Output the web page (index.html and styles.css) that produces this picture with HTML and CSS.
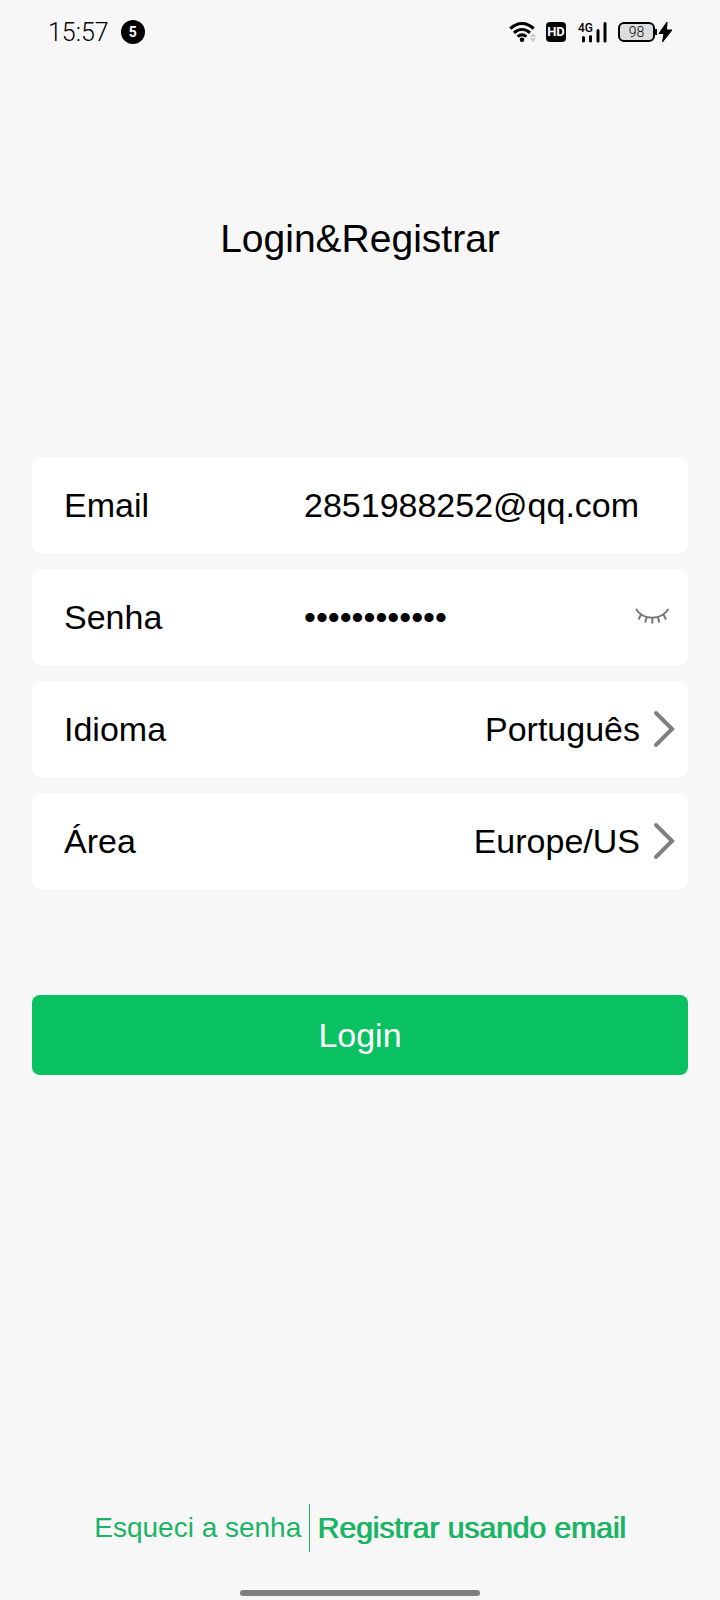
FILE: index.html
```html
<!DOCTYPE html>
<html lang="pt">
<head>
    <meta charset="UTF-8">
    <meta name="viewport" content="width=device-width, initial-scale=1.0">
    <title>Login&amp;Registrar</title>
    <link rel="stylesheet" href="styles.css">
</head>
<body>
    <header class="status-bar">
        <span class="time">15:57</span>
        <span class="badge">5</span>
        <div class="status-icons">
            <svg class="wifi" width="28" height="22" viewBox="0 0 28 22">
                <g fill="none" stroke="#000" stroke-width="3">
                    <path d="M1.3 7.6C8.5 0.8 17.5 0.8 24.7 7.6"/>
                    <path d="M5 11.8C10 7.3 16 7.3 21 11.8"/>
                    <path d="M8.6 15.7C11.5 13.3 14.5 13.3 17.4 15.7"/>
                </g>
                <circle cx="13" cy="18.8" r="2.3"/>
                <path d="M21.5 15.5L24 12.5L26.5 15.5ZM21.5 17.5L24 20.5L26.5 17.5Z" fill="#ccc" stroke="#ccc"/>
            </svg>
            <span class="hd">HD</span>
            <svg class="signal" width="30" height="22" viewBox="0 0 30 22">
                <text class="signal-text" x="0" y="11">4G</text>
                <path d="M5.5 16.5V20M12.5 15.5V20M20 9.5V20M27 2.5V20" stroke="#000" stroke-width="3" stroke-linecap="round"/>
            </svg>
            <span class="battery">98</span>
            <svg class="bolt" width="18" height="22" viewBox="0 0 18 22">
                <path d="M0 8V14" stroke="#000" stroke-width="4"/>
                <path d="M12 1L4 12.5H9L7.5 21L17 9H11.5Z" stroke="#000"/>
            </svg>
        </div>
    </header>

    <main>
        <h1>Login&amp;Registrar</h1>

        <form>
            <div class="row">
                <label for="email">Email</label>
                <input type="email" id="email" value="2851988252@qq.com">
            </div>
            <div class="row">
                <label for="senha">Senha</label>
                <input type="password" id="senha" value="abcdef123456">
                <button type="button" class="eye" aria-label="Mostrar senha">
                    <svg width="36" height="20" viewBox="0 0 36 20" fill="none" stroke="#777" stroke-width="2">
                        <path d="M2 2C9 13.5 27 13.5 34.5 2M7 7.5L4.5 12.5M12.5 10.5L11.3 15.5M18.3 10.8V16.5M24 10.5L25.3 15.5M29.5 7.5L32 12.5"/>
                    </svg>
                </button>
            </div>
            <div class="row">
                <label for="idioma">Idioma</label>
                <select id="idioma">
                    <option>Português</option>
                </select>
                <svg class="arrow" width="24" height="40" viewBox="0 0 24 40">
                    <path d="M4 4L20 20L4 36"/>
                </svg>
            </div>
            <div class="row">
                <label for="area">Área</label>
                <select id="area">
                    <option>Europe/US</option>
                </select>
                <svg class="arrow" width="24" height="40" viewBox="0 0 24 40">
                    <path d="M4 4L20 20L4 36"/>
                </svg>
            </div>

            <button type="submit" class="login">Login</button>
        </form>
    </main>

    <footer>
        <nav class="links">
            <a href="#" class="forgot">Esqueci a senha</a>
            <a href="#" class="register">Registrar usando email</a>
        </nav>
        <div class="home-bar"></div>
    </footer>
</body>
</html>
```
FILE: styles.css
```css
* {
    margin: 0;
    padding: 0;
    box-sizing: border-box;
}

body {
    font-family: "Liberation Sans", Arial, sans-serif;
    font-size: 34px;
    background: #f7f7f7;
    color: #000;
    display: flex;
    flex-direction: column;
    min-height: 100vh;
}

.status-bar {
    display: flex;
    align-items: center;
    height: 64px;
    padding: 0 47px 0 48px;
    font-family: Roboto, sans-serif;
}

.time {
    font-size: 25px;
    font-weight: 300;
}

.badge {
    width: 24px;
    height: 24px;
    margin-left: 12px;
    border-radius: 50%;
    background: #000;
    color: #fff;
    font-size: 14px;
    font-weight: bold;
    line-height: 25px;
    text-align: center;
}

.status-icons {
    display: flex;
    align-items: center;
    margin-left: auto;
}

.hd {
    width: 20px;
    height: 20px;
    margin: 0 12px 0 9px;
    border-radius: 4px;
    background: #000;
    color: #fff;
    font-size: 13px;
    font-weight: bold;
    line-height: 20px;
    text-align: center;
}

.signal-text {
    font-size: 12px;
    font-weight: 500;
}

.battery {
    width: 37px;
    height: 20px;
    margin-left: 10px;
    border: 2px solid #000;
    border-radius: 6px;
    background: #ddd;
    font-size: 14px;
    font-weight: 300;
    line-height: 17px;
    text-align: center;
}

h1 {
    margin-top: 151px;
    font-size: 39px;
    font-weight: normal;
    line-height: 48px;
    text-align: center;
}

form {
    display: flex;
    flex-direction: column;
    gap: 16px;
    margin-top: 194px;
    padding: 0 32px;
}

.row {
    display: flex;
    align-items: center;
    height: 96px;
    padding: 0 12px 0 32px;
    border-radius: 8px;
    background: #fff;
}

.row label {
    width: 240px;
    flex-shrink: 0;
}

.row input,
.row select {
    flex: 1;
    min-width: 0;
    height: 48px;
    border: none;
    outline: none;
    background: none;
    color: #000;
    font: inherit;
}

.row select {
    appearance: none;
    text-align: right;
    text-align-last: right;
}

.eye {
    display: flex;
    margin-right: 6px;
    border: none;
    background: none;
}

.arrow {
    margin-left: 12px;
    fill: none;
    stroke: #808080;
    stroke-width: 4;
    stroke-linecap: round;
}

.login {
    height: 80px;
    margin-top: 90px;
    border: none;
    border-radius: 8px;
    background: #09c160;
    color: #fff;
    font: inherit;
}

footer {
    margin-top: auto;
    padding: 40px 0 4px;
}

.links {
    display: flex;
    justify-content: center;
    line-height: 48px;
}

.links a {
    color: #1bb464;
    text-decoration: none;
}

.forgot {
    padding-right: 8px;
    border-right: 1px solid #1bb464;
    font-size: 28px;
}

.register {
    padding-left: 7px;
    font-size: 30px;
    text-shadow: 1px 0 #1bb464;
}

.home-bar {
    width: 240px;
    height: 6px;
    margin: 38px auto 0;
    border-radius: 3px;
    background: #7f7f7f;
}
```
